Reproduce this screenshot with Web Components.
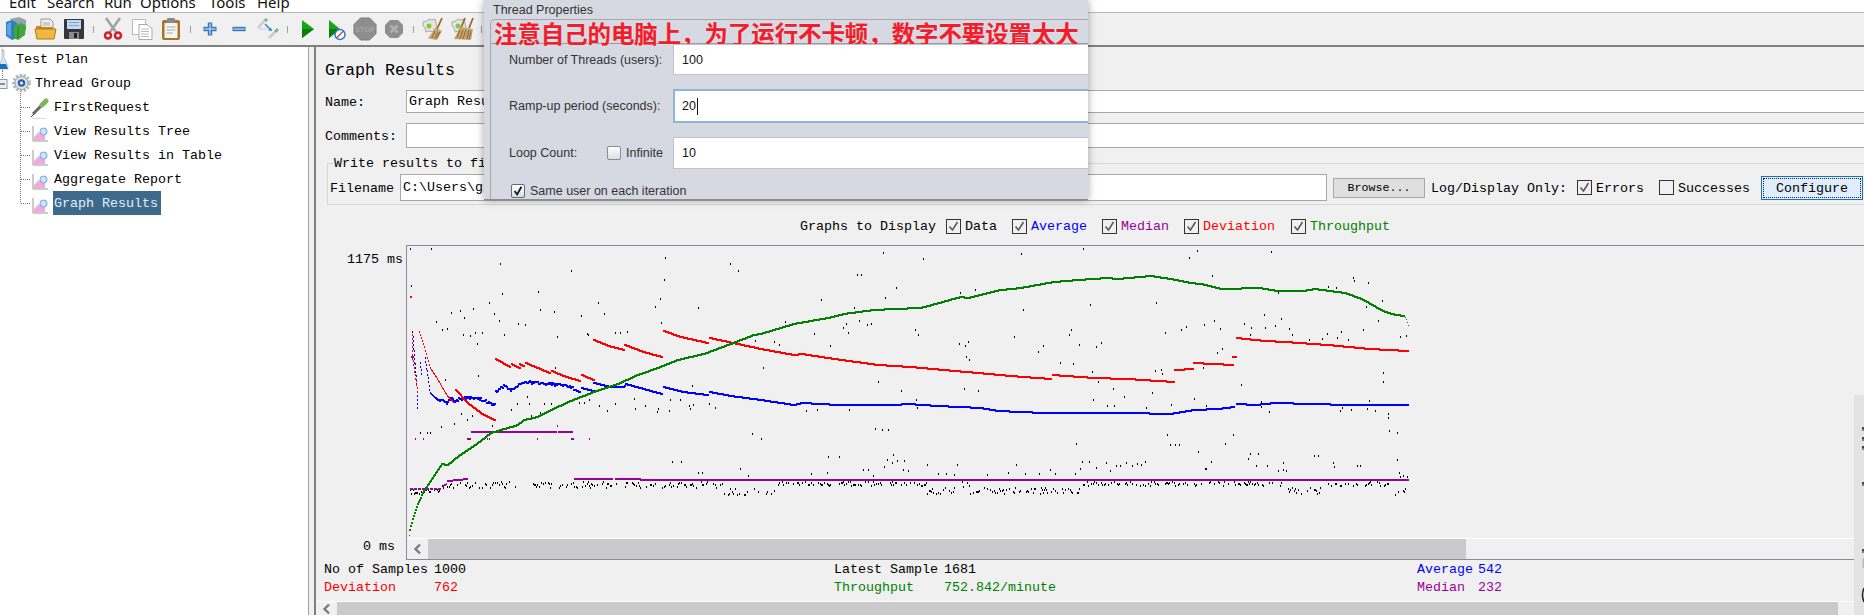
<!DOCTYPE html>
<html lang="en">
<head>
<meta charset="utf-8">
<title>Graph Results</title>
<style>
    html, body { margin: 0; padding: 0; height: 615px; overflow: hidden; background: #f0f0f0; }
    body { font-family: "Liberation Mono", "Noto Sans CJK SC", monospace; font-size: 13.33px; color: #000; }
</style>
</head>
<body>

<jm-app>
    <jm-menubar slot="menu">
        <span style="width:38px;margin-left:9px">Edit</span><span style="width:57px">Search</span><span style="width:36px">Run</span><span style="width:69px">Options</span><span style="width:48px">Tools</span><span>Help</span>
    </jm-menubar>

    <jm-toolbar slot="tools">
        <jm-tool><svg width="24" height="24"><path d="M6 2l9-2 7 3v9l-8 6z" fill="#98a2a8"/><path d="M2 5l6-2 5 3v15l-5 2-6-4z" fill="#2f7fc1"/><path d="M3 7l4-2v15l-4-3z" fill="#5aa6e0"/><path d="M10 9l7-3 5 3-1 9-7 5-4-2z" fill="#3fa83a"/><path d="M14 9v13" stroke="#2a7d28"/></svg></jm-tool>
        <jm-tool><svg width="24" height="24"><path d="M8 2h9l3 3v9H8z" fill="#eee" stroke="#999"/><path d="M10 6h7M10 8h7" stroke="#aaa"/><path d="M3 9h5l1 1h11v11H3z" fill="#c88a1e"/><path d="M2 12h21l-2 10H4z" fill="#f0b840" stroke="#b07a18"/></svg></jm-tool>
        <jm-tool><svg width="24" height="24"><rect x="2" y="2" width="20" height="20" rx="1" fill="#33363c"/><rect x="5" y="3" width="14" height="9" fill="#c2d8f0"/><path d="M7 5.500h10M7 8.500h10" stroke="#7fa6cf"/><rect x="7" y="15" width="10" height="7" fill="#8a8a8a"/><rect x="12" y="16" width="3" height="5" fill="#222"/></svg></jm-tool>
        <jm-sep></jm-sep>
        <jm-tool><svg width="24" height="24"><path d="M5 1l10 14M19 1L9 15" stroke="#a0a4a8" stroke-width="2.600"/><circle cx="7" cy="18.500" r="3" fill="none" stroke="#d0202a" stroke-width="2.600"/><circle cx="17" cy="18.500" r="3" fill="none" stroke="#d0202a" stroke-width="2.600"/></svg></jm-tool>
        <jm-tool><svg width="24" height="24"><rect x="2.500" y="2.500" width="13" height="15" fill="#fff" stroke="#bbb"/><path d="M9 7.500h8l5 4v11H9z" fill="#fff" stroke="#aaa"/><path d="M11 12h8M11 14.500h8M11 17h8M11 19.500h8" stroke="#bbb"/></svg></jm-tool>
        <jm-tool><svg width="24" height="24"><rect x="3" y="3" width="18" height="20" rx="2" fill="#a8742a"/><rect x="5.500" y="6" width="13" height="15" fill="#f4f4f0"/><rect x="8" y="1" width="8" height="5" rx="1" fill="#8a8a8a"/><path d="M7.500 10h9M7.500 13h9M7.500 16h6" stroke="#aaa"/></svg></jm-tool>
        <jm-sep></jm-sep>
        <jm-tool><svg width="24" height="24"><path d="M12 5.500v13M5.500 12h13" stroke="#3b78b8" stroke-width="4.400"/><path d="M12 6.500v11M6.500 12h11" stroke="#a8c8ea" stroke-width="1.500"/></svg></jm-tool>
        <jm-tool><svg width="24" height="24"><path d="M5.500 12h13" stroke="#3b78b8" stroke-width="4.400"/><path d="M6.500 12h11" stroke="#a8c8ea" stroke-width="1.500"/></svg></jm-tool>
        <jm-tool><svg width="24" height="24"><path d="M2 11l7-8" stroke="#ccc" stroke-width="2.500"/><path d="M9 4l2-2" stroke="#7cb87c" stroke-width="3"/><path d="M3 12h8" stroke="#ccc"/><path d="M13 21l6-6" stroke="#ccc" stroke-width="2.500"/><path d="M19 15l3-3" stroke="#7cb87c" stroke-width="3"/><path d="M9 7l6 6" stroke="#2a8ae0" stroke-width="1.500"/><path d="M16 14l-4-.5 3-3z" fill="#2a8ae0"/></svg></jm-tool>
        <jm-sep></jm-sep>
        <jm-tool><svg width="24" height="24"><path d="M7 3l12 9-12 9z" fill="#14a814"/><path d="M7 12h12l-12 9z" fill="#0a7d0a"/></svg></jm-tool>
        <jm-tool><svg width="24" height="24"><path d="M5 3l11 9-11 9z" fill="#14a814"/><path d="M5 12h11L5 21z" fill="#0a7d0a"/><circle cx="16" cy="17.500" r="5" fill="#fff" stroke="#2a78d8" stroke-width="1.500"/><path d="M12.500 21l7-7" stroke="#d04040" stroke-width="1.300"/></svg></jm-tool>
        <jm-tool><svg width="24" height="24"><path d="M7.500 1h9L23 7.500v9L16.500 23h-9L1 16.500v-9z" fill="#8e8e8e" stroke="#7a7a7a"/><text x="12" y="14.500" font-family="Liberation Sans" font-size="7.500" font-weight="700" text-anchor="middle" fill="#a6a6a6">STOP</text></svg></jm-tool>
        <jm-tool><svg width="24" height="24"><path d="M8 3h8l5 5v8l-5 5H8l-5-5V8z" fill="#8e8e8e"/><path d="M8.500 8.500l7 7M15.500 8.500l-7 7" stroke="#b0b0b0" stroke-width="2.800"/></svg></jm-tool>
        <jm-sep></jm-sep>
        <jm-tool><svg width="24" height="24"><path d="M2 5l4-1 2-2 3 1 3-1 1 4 1 5-3 1-1 3-4-1-3 1-1-4-2-2z" fill="#e4e4e0" stroke="#aaa"/><circle cx="8" cy="9" r="2.500" fill="#7ccf3a"/><path d="M21 1l-5 11" stroke="#9a6a2c" stroke-width="1.800"/><path d="M15 11l6 3-5 9-6-1-3-1z" fill="#c9a36c"/><path d="M14 14l-3 7M17 15l-3 7M19 15l-3 6" stroke="#8f6836"/></svg></jm-tool>
        <jm-tool><svg width="24" height="24"><path d="M2 5l4-1 2-2 3 1 3-1 1 4 1 5-3 1-1 3-4-1-3 1-1-4-2-2z" fill="#e4e4e0" stroke="#aaa"/><circle cx="8" cy="9" r="2.500" fill="#7ccf3a"/><path d="M15 1l-4 10M23 1l-4 10" stroke="#9a6a2c" stroke-width="1.800"/><path d="M10 10l13 2-2 11-17-1z" fill="#c9a36c"/><path d="M10 13l-3 8M13 13l-3 9M16 13l-3 9M19 13l-2 9M21 14l-2 8" stroke="#8f6836"/></svg></jm-tool>
        <jm-sep></jm-sep>
    </jm-toolbar>

    <jm-tree slot="tree">
        <jm-tree-row gutter="15">
            <svg slot="icon" width="15" height="24"><path d="M2 0v4M0 18l2-8V3h2v7l4 9v3H0z" fill="#d8e4ee" stroke="#9aa8b4" stroke-width=".6"/><path d="M0 17h6l2 5H0z" fill="#1a6fc0"/><path d="M2.500 24v-2" stroke="#777" stroke-dasharray="1 1"/></svg>
            Test Plan
        </jm-tree-row>
        <jm-tree-row gutter="34">
            <svg slot="icon" width="34" height="24"><path d="M2.500 0v7" stroke="#777" stroke-dasharray="1 1"/><rect x="-2" y="8.500" width="9" height="9" fill="#e8eef4" stroke="#8a9aa8"/><path d="M0 13h5" stroke="#333"/><path d="M20.500 22v2" stroke="#777" stroke-dasharray="1 1"/><g transform="translate(21.500 12)"><circle r="7.500" fill="none" stroke="#b4b4b4" stroke-width="3.600" stroke-dasharray="2.200 1.500"/><circle r="6.500" fill="#dfe3e8" stroke="#a0a4a8"/><circle r="3.800" fill="#2f62b0"/><circle r="1.600" fill="#e8f0fa"/></g></svg>
            Thread Group
        </jm-tree-row>
        <jm-tree-row gutter="53">
            <svg slot="icon" width="53" height="24"><path d="M20.500 0v24M21 12.500h10" stroke="#777" stroke-dasharray="1 1"/><path d="M33 19l8-8" stroke="#666" stroke-width="3"/><path d="M31 22l3-3" stroke="#333"/><path d="M42 10l4-4" stroke="#7db85a" stroke-width="5" stroke-linecap="round"/><path d="M32 23.500h14" stroke="#ddd"/></svg>
            FIrstRequest
        </jm-tree-row>
        <jm-tree-row gutter="53">
            <svg slot="icon" width="53" height="24"><path d="M20.500 0v24M21 12.500h10" stroke="#777" stroke-dasharray="1 1"/><path d="M33 7v15h15" fill="none" stroke="#999"/><path d="M34 21v-3l5-5 3 3 3-2v7z" fill="#f3a8e0"/><circle cx="43.500" cy="12.500" r="3.500" fill="#cfe4f8" stroke="#6ea4dc"/></svg>
            View Results Tree
        </jm-tree-row>
        <jm-tree-row gutter="53">
            <svg slot="icon" width="53" height="24"><path d="M20.500 0v24M21 12.500h10" stroke="#777" stroke-dasharray="1 1"/><path d="M33 7v15h15" fill="none" stroke="#999"/><path d="M34 21v-3l5-5 3 3 3-2v7z" fill="#f3a8e0"/><circle cx="43.500" cy="12.500" r="3.500" fill="#cfe4f8" stroke="#6ea4dc"/></svg>
            View Results in Table
        </jm-tree-row>
        <jm-tree-row gutter="53">
            <svg slot="icon" width="53" height="24"><path d="M20.500 0v24M21 12.500h10" stroke="#777" stroke-dasharray="1 1"/><path d="M33 7v15h15" fill="none" stroke="#999"/><path d="M34 21v-3l5-5 3 3 3-2v7z" fill="#f3a8e0"/><circle cx="43.500" cy="12.500" r="3.500" fill="#cfe4f8" stroke="#6ea4dc"/></svg>
            Aggregate Report
        </jm-tree-row>
        <jm-tree-row gutter="53" selected>
            <svg slot="icon" width="53" height="24"><path d="M20.500 0v12.500M21 12.500h10" stroke="#777" stroke-dasharray="1 1"/><path d="M33 7v15h15" fill="none" stroke="#999"/><path d="M34 21v-3l5-5 3 3 3-2v7z" fill="#f3a8e0"/><circle cx="43.500" cy="12.500" r="3.500" fill="#cfe4f8" stroke="#6ea4dc"/></svg>
            Graph Results
        </jm-tree-row>
    </jm-tree>

    <jm-graph-panel slot="panel"></jm-graph-panel>

    <jm-thread-dialog slot="overlay"></jm-thread-dialog>
    <jm-side-strip slot="overlay"></jm-side-strip>
</jm-app>

<script type="text/javascript">
    class JmApp extends HTMLElement {
        constructor() {
            super();
            this.attachShadow({mode:'open'}).innerHTML = `
                <style>
                    :host { display: block; width: 1864px; height: 615px; position: relative; overflow: hidden; background: #f0f0f0; }
                    .body { display: flex; height: 570px; border-top: 2px solid #808080; box-sizing: border-box; }
                    .left { width: 309px; flex: none; }
                    .gap { width: 5px; flex: none; }
                    .right { flex: 1; min-width: 0; border-left: 2px solid #808080; overflow: hidden; }
                </style>
                <slot name="menu"></slot>
                <slot name="tools"></slot>
                <div class="body">
                    <div class="left"><slot name="tree"></slot></div>
                    <div class="gap"></div>
                    <div class="right"><slot name="panel"></slot></div>
                </div>
                <slot name="overlay"></slot>`;
        }
    }

    class JmMenubar extends HTMLElement {
        constructor() {
            super();
            this.attachShadow({mode:'open'}).innerHTML = `
                <style>
                    :host { display: block; height: 13px; box-sizing: border-box; background: #fff; border-bottom: 1px solid #b8b8b8; overflow: hidden;
                        font-family: "Noto Sans", sans-serif; font-size: 15px; color: #111; }
                    .in { display: flex; align-items: flex-end; height: 12px; line-height: 20px; white-space: pre; }
                    ::slotted(span) { display: block; flex: none; }
                </style>
                <div class="in"><slot></slot></div>`;
        }
    }

    class JmToolbar extends HTMLElement {
        constructor() {
            super();
            this.attachShadow({mode:'open'}).innerHTML = `
                <style>
                    :host { display: flex; align-items: center; height: 32px; padding-left: 1.5px; background: #f0f0f0; }
                </style>
                <slot></slot>`;
        }
    }

    class JmTool extends HTMLElement {
        constructor() {
            super();
            this.attachShadow({mode:'open'}).innerHTML = `
                <style>
                    :host { display: flex; align-items: center; justify-content: center; flex: none; width: 29px; height: 32px; }
                </style>
                <slot></slot>`;
        }
    }

    class JmSep extends HTMLElement {
        constructor() {
            super();
            this.attachShadow({mode:'open'}).innerHTML = `
                <style>
                    :host { display: flex; justify-content: center; flex: none; width: 10px; }
                    i { display: block; width: 1px; height: 7px; background: #a0a0a0; }
                </style>
                <i></i>`;
        }
    }

    class JmTree extends HTMLElement {
        constructor() {
            super();
            this.attachShadow({mode:'open'}).innerHTML = `
                <style>
                    :host { display: block; height: 100%; box-sizing: border-box; background: #fff; border-right: 1px solid #a0a0a0; }
                </style>
                <slot></slot>`;
        }
    }

    class JmTreeRow extends HTMLElement {
        connectedCallback() {
            if (this.shadowRoot) return;
            let g = this.getAttribute('gutter');
            this.attachShadow({mode:'open'}).innerHTML = `
                <style>
                    :host { display: flex; height: 24px; white-space: nowrap; }
                    .ico { width: ${g}px; flex: none; height: 24px; overflow: visible; line-height: 0; }
                    .txt { height: 24px; line-height: 26px; padding: 0 3px 0 1px; overflow: hidden; }
                    :host([selected]) .txt { background: #3d6a8c; color: #e6eef4; }
                </style>
                <div class="ico"><slot name="icon"></slot></div>
                <div class="txt"><slot></slot></div>`;
        }
    }

    class JmCheck extends HTMLElement {
        connectedCallback() {
            if (this.shadowRoot) return;
            let on = this.hasAttribute('checked');
            this.attachShadow({mode:'open'}).innerHTML = `
                <style>
                    :host { display: inline-flex; flex: none; align-items: center; gap: 4px; white-space: nowrap; }
                    svg { flex: none; display: block; }
                    span { padding-top: 1px; }
                </style>
                <svg width="15" height="15"><rect x=".5" y=".5" width="14" height="14" fill="none" stroke="#333"/>${on ? '<path d="M3.500 7.500l3 3.500 5-8" fill="none" stroke="#555" stroke-width="1.500"/>' : ''}</svg>
                <span><slot></slot></span>`;
        }
    }

    class JmScrollbar extends HTMLElement {
        connectedCallback() {
            if (this.shadowRoot) return;
            let w = this.getAttribute('thumb');
            this.attachShadow({mode:'open'}).innerHTML = `
                <style>
                    :host { display: flex; box-sizing: border-box; border-top: 1px solid #fff; background: #f0f0f0; height: ${this.getAttribute('size')}px; }
                    .arrow { width: 21px; flex: none; display: flex; align-items: center; justify-content: center; }
                    .thumb { width: ${w}px; flex: none; background: #cacaca; }
                </style>
                <div class="arrow"><svg width="9" height="12"><path d="M7 1.500L2.500 6 7 10.500" fill="none" stroke="#7c7c7c" stroke-width="2.400"/></svg></div>
                <div class="thumb"></div>`;
        }
    }

    class JmGraphPanel extends HTMLElement {
        constructor() {
            super();
            this.attachShadow({mode:'open'}).innerHTML = `
                <style>
                    :host { display: block; width: 1560px; height: 568px; }
                    h1 { margin: 0; padding: 13px 0 0 9px; height: 30px; font: 16.67px/22px "Liberation Mono", monospace; }
                    .row { display: flex; align-items: center; padding-left: 9px; }
                    .row label { width: 81px; flex: none; padding-top: 1px; }
                    .inp { box-sizing: border-box; flex: none; width: 1500px; background: #fff; border: 1px solid #a8a8a8; padding-left: 2px; white-space: nowrap; }
                    .name { height: 23px; line-height: 22px; }
                    .comments { height: 25px; margin-top: 10px; }
                    fieldset { margin: 7px 0 0 11px; padding: 3px 0 2px 2px; width: 1560px; box-sizing: border-box; border: 1px solid #d8d8d8; height: 50px; min-width: 0; }
                    legend { margin-left: 3px; padding: 0 1px; line-height: 16px; }
                    legend span { position: relative; top: 1px; }
                    .file { display: flex; align-items: center; white-space: nowrap; }
                    .file > * { flex: none; }
                    .file > span { padding-top: 1px; }
                    .file .inp { width: 927px; height: 27px; line-height: 26px; margin-left: 6px; }
                    .browse { box-sizing: border-box; width: 92px; height: 20px; line-height: 19px; margin-left: 6px; text-align: center; background: #dfdfdf; border: 1px solid #a8a8a8; font-size: 11.67px; }
                    .file .log { margin-left: 6px; width: 136px; }
                    .errs { margin-left: 10px; }
                    .succ { margin-left: 15px; }
                    .conf { box-sizing: border-box; margin-left: 11px; width: 102px; height: 24px; background: #deecfb; border: 1px solid #0f73c8; padding: 1px; }
                    .conf div { box-sizing: border-box; height: 20px; line-height: 19px; text-align: center; border: 1px dotted #222; }
                    .graphs { display: flex; align-items: center; height: 22px; margin-top: 10px; padding-left: 484px; white-space: nowrap; }
                    .graphs > span { padding-top: 1px; }
                    .graphs jm-check { margin-left: 15px; }
                    .graphs jm-check:first-of-type { margin-left: 10px; }
                    .graphs jm-check:last-of-type { margin-left: 16px; }
                    .plot-row { display: flex; height: 315px; margin-top: 8px; }
                    .yaxis { width: 90px; flex: none; display: flex; flex-direction: column; justify-content: space-between; box-sizing: border-box; padding: 7px 0 5px 0; }
                    .yaxis span { line-height: 16px; }
                    .box { flex: 1; min-width: 0; box-sizing: border-box; border: 1px solid #8a8a96; border-right: 0; display: flex; flex-direction: column; }
                    .stats { display: grid; grid-template-columns: 510px 583px 1fr; grid-auto-rows: 18px; height: 41px; padding: 1px 0 0 8px; box-sizing: border-box; line-height: 18px; }
                    .stats div { display: flex; white-space: pre; }
                    .stats b { font-weight: normal; flex: none; }
                    .c1 b { width: 110px; }
                    .c3 b { width: 61px; }
                    .red { color: #ff0000; }
                    .green { color: #008000; }
                    .blue { color: #0000ff; }
                    .purple { color: #990099; }
                </style>
                <h1>Graph Results</h1>
                <div class="row"><label>Name:</label><div class="inp name">Graph Results</div></div>
                <div class="row comments"><label>Comments:</label><div class="inp" style="height:25px"></div></div>
                <fieldset>
                    <legend><span>Write results to file / Read from file</span></legend>
                    <div class="file">
                        <span>Filename</span>
                        <div class="inp">C:\\Users\\gzh\\Desktop\\jmeter\\result.jtl</div>
                        <div class="browse">Browse...</div>
                        <span class="log">Log/Display Only:</span>
                        <jm-check class="errs" checked>Errors</jm-check>
                        <jm-check class="succ">Successes</jm-check>
                        <div class="conf"><div>Configure</div></div>
                    </div>
                </fieldset>
                <div class="graphs">
                    <span>Graphs to Display</span>
                    <jm-check checked>Data</jm-check>
                    <jm-check checked class="blue">Average</jm-check>
                    <jm-check checked class="purple">Median</jm-check>
                    <jm-check checked class="red">Deviation</jm-check>
                    <jm-check checked class="green">Throughput</jm-check>
                </div>
                <div class="plot-row">
                    <div class="yaxis"><span style="padding-left:31px">1175 ms</span><span style="padding-left:47px">0 ms</span></div>
                    <div class="box">
                        <jm-plot></jm-plot>
                        <jm-scrollbar size="21" thumb="1038"></jm-scrollbar>
                    </div>
                </div>
                <div class="stats">
                    <div class="c1"><b>No of Samples</b>1000</div>
                    <div class="c1"><b>Latest Sample</b>1681</div>
                    <div class="c3 blue"><b>Average</b>542</div>
                    <div class="c1 red"><b>Deviation</b>762</div>
                    <div class="c1 green"><b>Throughput</b>752.842/minute</div>
                    <div class="c3 purple"><b>Median</b>232</div>
                </div>
                <jm-scrollbar size="14" thumb="1501"></jm-scrollbar>`;
        }
    }

    // curve points are page coordinates read off the reference
    const GREEN = [[409,529],[412,518],[417,503],[423,490],[433,475],[441,463],[447,464],[458,455],[470,447],[480,440],[490,432],[507,427],[517,424],[523,419],[537,416],[550,409],[570,400],[593,391],[617,383],[637,374],[657,367],[677,359],[703,353],[730,343],[753,334],[760,333],[793,323],[827,317],[843,313],[873,309],[893,308],[920,307],[960,296],[967,297],[1000,289],[1020,287],[1053,281],[1077,279],[1107,277],[1117,278],[1150,275],[1170,278],[1190,282],[1200,283],[1221,288],[1259,287],[1276,290],[1302,290],[1314,288],[1344,292],[1361,298],[1382,310],[1391,313],[1403,315]];
    const GREEN_END = [[1404,315],[1406,319],[1408,325]];
    const RED_SPARSE = [[[412,334],[413,360],[417,387],[418,392]], [[419,331],[423,343],[430,367],[437,378],[447,395],[454,402]]];
    const RED = [
        [[455,389],[467,402],[480,412],[494,419]],
        [[495,358],[509,366]], [[511,363],[519,367]], [[519,363],[523,365]],
        [[525,362],[537,367],[549,372]], [[551,370],[563,375],[579,380]], [[581,374],[593,379]],
        [[593,339],[608,345],[623,349]], [[624,344],[643,351],[661,356]],
        [[663,330],[680,336],[707,342]],
        [[709,337],[737,343],[760,348],[793,354],[801,353],[827,357],[877,364],[910,366],[943,369],[977,372],[1010,375],[1050,378]],
        [[1052,374],[1093,377],[1127,378],[1173,381]],
        [[1174,369],[1192,368]], [[1193,362],[1232,364]], [[1232,356],[1235,356]],
        [[1236,337],[1264,340],[1285,341],[1327,344],[1369,348],[1407,350]]
    ];
    const BLUE_SPARSE = [[[413,336],[415,363],[417,387],[418,409]], [[420,362],[422,375],[425,357],[428,377],[430,392],[435,397]]];
    const BLUE_NOISY = [
        [[435,397],[442,400],[446,403],[450,397],[454,402],[458,398],[473,397],[483,399],[494,404]],
        [[495,390],[503,385],[509,389],[520,383],[525,381],[543,383],[557,384],[570,386],[579,391]]
    ];
    const BLUE = [
        [[581,387],[593,390]], [[593,382],[610,386],[623,386],[625,383],[643,388],[661,393]],
        [[663,386],[683,391],[707,394]],
        [[709,391],[730,395],[760,399],[793,404],[802,402],[837,404],[860,404],[893,404],[907,403],[937,405],[980,407],[997,410],[1043,412],[1093,412],[1127,412],[1170,413],[1193,409],[1217,408],[1233,406]],
        [[1236,403],[1255,404],[1274,402],[1312,403],[1348,404],[1407,404]]
    ];
    const PURPLE = [
        [[443,485],[446,483]], [[447,480],[467,478]], [[471,431],[537,431]], [[538,431],[556,431]], [[558,431],[572,431]],
        [[574,478],[612,478]], [[615,478],[640,478]], [[640,479],[1408,479]],
        [[467,438],[470,438]], [[411,356],[413,356]], [[571,438],[573,438]]
    ];
    const PURPLE_DOTS = [[415,438],[423,438],[487,438],[489,438],[537,438],[557,425],[589,438]];
    // data dots read from three crops of the reference: crop x, crop y, per crop scale
    const DOTS_A = [364,25,571,68,784,90,1066,50,1063,117,1261,68,1285,90,575,160,685,152,538,187,865,185,1051,173,1036,197,1165,200,424,215,451,210,490,203,463,230,553,218,691,207,733,212,881,218,814,225,379,242,568,240,625,248,646,251,1054,245,397,266,412,263,305,272,460,282,481,285,496,275,517,275,583,282,742,288,830,280,835,282,916,275,930,276,952,272,502,308,1296,293,1336,300,736,380,505,405,406,416,1147,435,652,467,622,489,604,507,658,489,703,489,724,489,691,516,664,526,838,477,808,487,823,487,868,495,916,490,892,510,973,474,976,503,1006,495,1045,505,1042,513,1081,477,1078,510,1111,477,1138,495,1150,492,1141,504,1198,489,1216,501,454,520,472,537,487,525,433,548,394,558,331,576,352,576,361,576,545,555,1327,578,1087,662,1114,662,1165,695,1177,695,1291,684,1315,705];
    const DOTS_B = [370,36,490,54,784,39,970,25,1312,30,1288,50,292,101,304,101,409,141,184,177,376,171,601,156,646,147,991,191,1189,185,283,201,790,207,76,243,298,240,259,249,250,261,265,276,322,252,333,249,163,279,466,268,475,282,1333,252,1279,258,1264,267,1216,276,934,267,928,282,762,288,43,303,58,312,211,315,598,309,616,315,625,303,850,315,835,333,958,312,1009,318,1024,306,619,348,628,357,901,366,940,369,10,381,997,393,1186,390,1204,387,1207,399,1330,381,355,423,1015,423,424,450,613,444,655,450,1060,444,1177,456,1000,477,1093,468,1303,474,469,477,1042,495,1063,495,1159,501,1234,492,268,507,172,507,139,510,472,501,346,564,367,567,385,567,4,594,1222,582,1231,612,1246,612,1258,612,949,609,1315,633,205,648,238,648,400,642,382,657,397,666,412,660,433,660,373,678,310,687,325,687,430,687,444,690,502,672,592,672,769,672,154,699,202,696,340,705,1336,684,967,662,988,662,1039,665,1099,665,1132,668,1156,663,1069,675,1051,690,1117,675,1144,672,1009,680,1081,675,535,699,559,699,583,702,682,702,745,696,796,699,838,699,871,687,886,699,946,699,961,684];
    const DOTS_C = [168,32,29,104,360,110,363,120,397,126,303,138,322,141,183,156,429,180,391,198,150,222,32,240,190,234,421,240,10,252,48,264,105,249,121,261,154,261,178,255,211,264,218,282,117,282,300,279,287,294,258,297,333,273,324,291,350,297,385,267,473,288,487,285,52,324,41,336,7,381,433,396,431,423,97,432,15,495,400,480,145,483,162,513,143,498,330,510,336,500,357,507,393,504,414,510,443,518,444,531,447,570,466,576,79,581,60,609,119,638,137,638,268,645,279,645,114,654,25,663,464,657,197,666,313,666,317,678,131,675,158,675,370,675,377,676,13,684,185,690,197,687,203,690,469,696,471,708,479,705,488,708];
    // the dense band under the median line: [from x, to x, top y, bottom y]
    const BANDS = [[410,420,489,493],[420,440,488,492],[440,723,481,487],[723,775,487,495],[775,927,481,485],[927,960,487,493],[960,970,481,486],[970,1080,487,493],[1080,1288,481,485],[1288,1322,487,493],[1322,1390,481,485],[1390,1408,484,494]];

    class JmPlot extends HTMLElement {
        constructor() {
            super();
            this.attachShadow({mode:'open'}).innerHTML = `
                <style>
                    :host { display: block; height: 292px; overflow: hidden; }
                    canvas { display: block; }
                </style>
                <canvas width="1457" height="292"></canvas>`;
            this.ox = 407;
            this.oy = 246;
            this.ctx = this.shadowRoot.querySelector('canvas').getContext('2d');
            this.seed = 1681;
        }

        connectedCallback() {
            this._dots();
            this._noisy(BLUE_NOISY, '#0000ff');
            this._curve(BLUE, '#0000ff', 2, 2);
            this._sparse(BLUE_SPARSE, '#0000ff');
            this._dotAt(410, 248, '#0000ff', 1, 2);
            this._dotAt(411, 285, '#0000ff', 1, 2);
            this._curve(PURPLE, '#990099', 1, 2);
            this._dashed(410, 440, 488, '#990099');
            PURPLE_DOTS.forEach(p => this._dotAt(p[0], p[1], '#990099', 1, 2));
            this._curve(RED, '#ff0000', 2, 2);
            this._sparse(RED_SPARSE, '#ff0000');
            this._dotAt(410, 296, '#ff0000', 2, 2);
            this._curve([GREEN], '#008000', 2, 2);
            this._curve([GREEN_END], '#008000', 1, 1);
            this._dotAt(409, 535, '#ff0000', 1, 1);
        }

        _rnd() {
            this.seed = (this.seed * 16807) % 2147483647;
            return this.seed / 2147483647;
        }

        _dotAt(x, y, color, w, h) {
            this.ctx.fillStyle = color;
            this.ctx.fillRect(x - this.ox, Math.round(y) - this.oy, w, h);
        }

        _yAt(pts, x) {
            for (let i = 1; i < pts.length; i++) {
                if (x <= pts[i][0]) {
                    let a = pts[i-1], b = pts[i];
                    return b[0] === a[0] ? b[1] : a[1] + (b[1] - a[1]) * (x - a[0]) / (b[0] - a[0]);
                }
            }
            return pts[pts.length-1][1];
        }

        _curve(segs, color, w, h) {
            segs.forEach(pts => {
                for (let x = pts[0][0]; x <= pts[pts.length-1][0]; x++) {
                    this._dotAt(x, this._yAt(pts, x), color, w, h);
                }
            });
        }

        // average wobbles while few samples are in
        _noisy(segs, color) {
            segs.forEach(pts => {
                for (let x = pts[0][0]; x <= pts[pts.length-1][0]; x++) {
                    this._dotAt(x, this._yAt(pts, x) + (this._rnd() - 0.5) * 3, color, 2, 2);
                }
            });
        }

        _sparse(segs, color) {
            segs.forEach(pts => {
                for (let x = pts[0][0]; x <= pts[pts.length-1][0]; x++) {
                    let y0 = this._yAt(pts, x), y1 = this._yAt(pts, x + 1);
                    for (let y = y0; y < y1; y += 4) this._dotAt(x, y, color, 1, 2);
                }
            });
        }

        _dashed(x0, x1, y, color) {
            for (let x = x0; x < x1; x += 4) this._dotAt(x, y, color, 3, 2);
        }

        _dots() {
            for (let i = 0; i < DOTS_A.length; i += 2) this._dotAt(Math.round(310 + DOTS_A[i] / 3), 240 + DOTS_A[i+1] / 3, '#000', 1, 2);
            for (let i = 0; i < DOTS_B.length; i += 2) this._dotAt(Math.round(760 + DOTS_B[i] / 3), 240 + DOTS_B[i+1] / 3, '#000', 1, 2);
            for (let i = 0; i < DOTS_C.length; i += 2) this._dotAt(Math.round(1200 + DOTS_C[i] / 2.36), 240 + DOTS_C[i+1] / 3, '#000', 1, 2);
            BANDS.forEach(b => {
                for (let x = b[0]; x < b[1]; x++) {
                    if (this._rnd() < 0.42) this._dotAt(x, b[2] + this._rnd() * (b[3] - b[2]), '#000', 1, 2);
                }
            });
        }
    }

    class JmThreadDialog extends HTMLElement {
        constructor() {
            super();
            this.attachShadow({mode:'open'}).innerHTML = `
                <style>
                    :host { position: absolute; left: 484px; top: 0; width: 604px; height: 200px; box-sizing: border-box; background: #d6d9e2; box-shadow: 0 0 8px rgba(0,0,0,.35); border-bottom: 1px solid #8c8c94;
                        font-family: "Liberation Sans", sans-serif; font-size: 12.5px; color: #333; overflow: visible; }
                    .title { height: 19px; line-height: 20px; padding-left: 9px; font-size: 12.5px; }
                    .pane { margin-left: 6px; height: 180px; box-sizing: border-box; border: 1px solid #a6a8ae; border-width: 1px 0 0 1px; border-radius: 5px 0 0 0; overflow: hidden; }
                    .note { height: 23px; padding-left: 3px; white-space: nowrap; border-bottom: 1px solid #9a9ca4; box-sizing: content-box;
                        font: 700 23.4px/27px "Noto Sans CJK SC", "Liberation Sans", sans-serif; color: #f01e2c; text-shadow: 0 0 2px rgba(255,255,255,.7); -webkit-text-stroke: .2px #f01e2c; }
                    .r { display: flex; align-items: center; padding-left: 18px; white-space: nowrap; }
                    .r .lab { width: 164px; flex: none; }
                    .f { flex: 1; box-sizing: border-box; background: #fff; border: 1px solid #c0c2c8; border-right: 0; padding-left: 8px; font-size: 12.5px; color: #111; display: flex; align-items: center; }
                    .r1 .f { height: 31px; }
                    .r2 { margin-top: 14px; }
                    .r2 .f { height: 34px; border: 2px solid #8fb4dc; border-right: 0; padding-left: 7px; }
                    .caret { display: inline-block; width: 1px; height: 17px; background: #111; margin-left: 1px; }
                    .r3 { margin-top: 14px; }
                    .r3 .f { height: 32px; }
                    .lab.loop { display: flex; align-items: center; }
                    .cb { box-sizing: border-box; width: 14px; height: 14px; border: 1px solid #8a8c94; border-radius: 2px; background: linear-gradient(#fff, #dcdde2); flex: none; display: block; }
                    .loop .cb { margin-left: 30px; margin-right: 5px; }
                    .same { display: flex; align-items: center; height: 14px; margin: 15px 0 0 20px; }
                    .same .cb { margin-right: 5px; border-color: #5a6a88; }
                </style>
                <div class="title">Thread Properties</div>
                <div class="pane">
                    <div class="note">注意自己的电脑上，为了运行不卡顿，数字不要设置太大</div>
                    <div class="r r1"><span class="lab">Number of Threads (users):</span><div class="f">100</div></div>
                    <div class="r r2"><span class="lab">Ramp-up period (seconds):</span><div class="f">20<i class="caret"></i></div></div>
                    <div class="r r3"><span class="lab loop">Loop Count:<i class="cb"></i>Infinite</span><div class="f">10</div></div>
                    <div class="same"><svg class="cb" viewBox="0 0 14 14"><path d="M3 7l3 4 5-9" fill="none" stroke="#111" stroke-width="2"/></svg>Same user on each iteration</div>
                </div>`;
        }
    }

    class JmSideStrip extends HTMLElement {
        constructor() {
            super();
            this.attachShadow({mode:'open'}).innerHTML = `
                <style>
                    :host { position: absolute; right: 0; top: 395px; width: 10px; height: 220px; background: #e3e3e3; overflow: hidden; }
                    svg { display: block; }
                </style>
                <svg width="10" height="220"><path d="M8 33h2M8 43h2M8 52h2M8 88h2M8 155h2" stroke="#222" stroke-width="1.500"/><path d="M9 33v3M9 43v3M9 52v3M9 88v3M9 155v3" stroke="#222"/><rect x="8.500" y="163" width="2" height="10" fill="#bbb"/><path d="M10 193q-3 7 0 14" fill="none" stroke="#222" stroke-width="1.500"/></svg>`;
        }
    }

    customElements.define('jm-menubar', JmMenubar);
    customElements.define('jm-toolbar', JmToolbar);
    customElements.define('jm-tool', JmTool);
    customElements.define('jm-sep', JmSep);
    customElements.define('jm-tree', JmTree);
    customElements.define('jm-tree-row', JmTreeRow);
    customElements.define('jm-check', JmCheck);
    customElements.define('jm-scrollbar', JmScrollbar);
    customElements.define('jm-plot', JmPlot);
    customElements.define('jm-graph-panel', JmGraphPanel);
    customElements.define('jm-thread-dialog', JmThreadDialog);
    customElements.define('jm-side-strip', JmSideStrip);
    customElements.define('jm-app', JmApp);
</script>
</body>
</html>
